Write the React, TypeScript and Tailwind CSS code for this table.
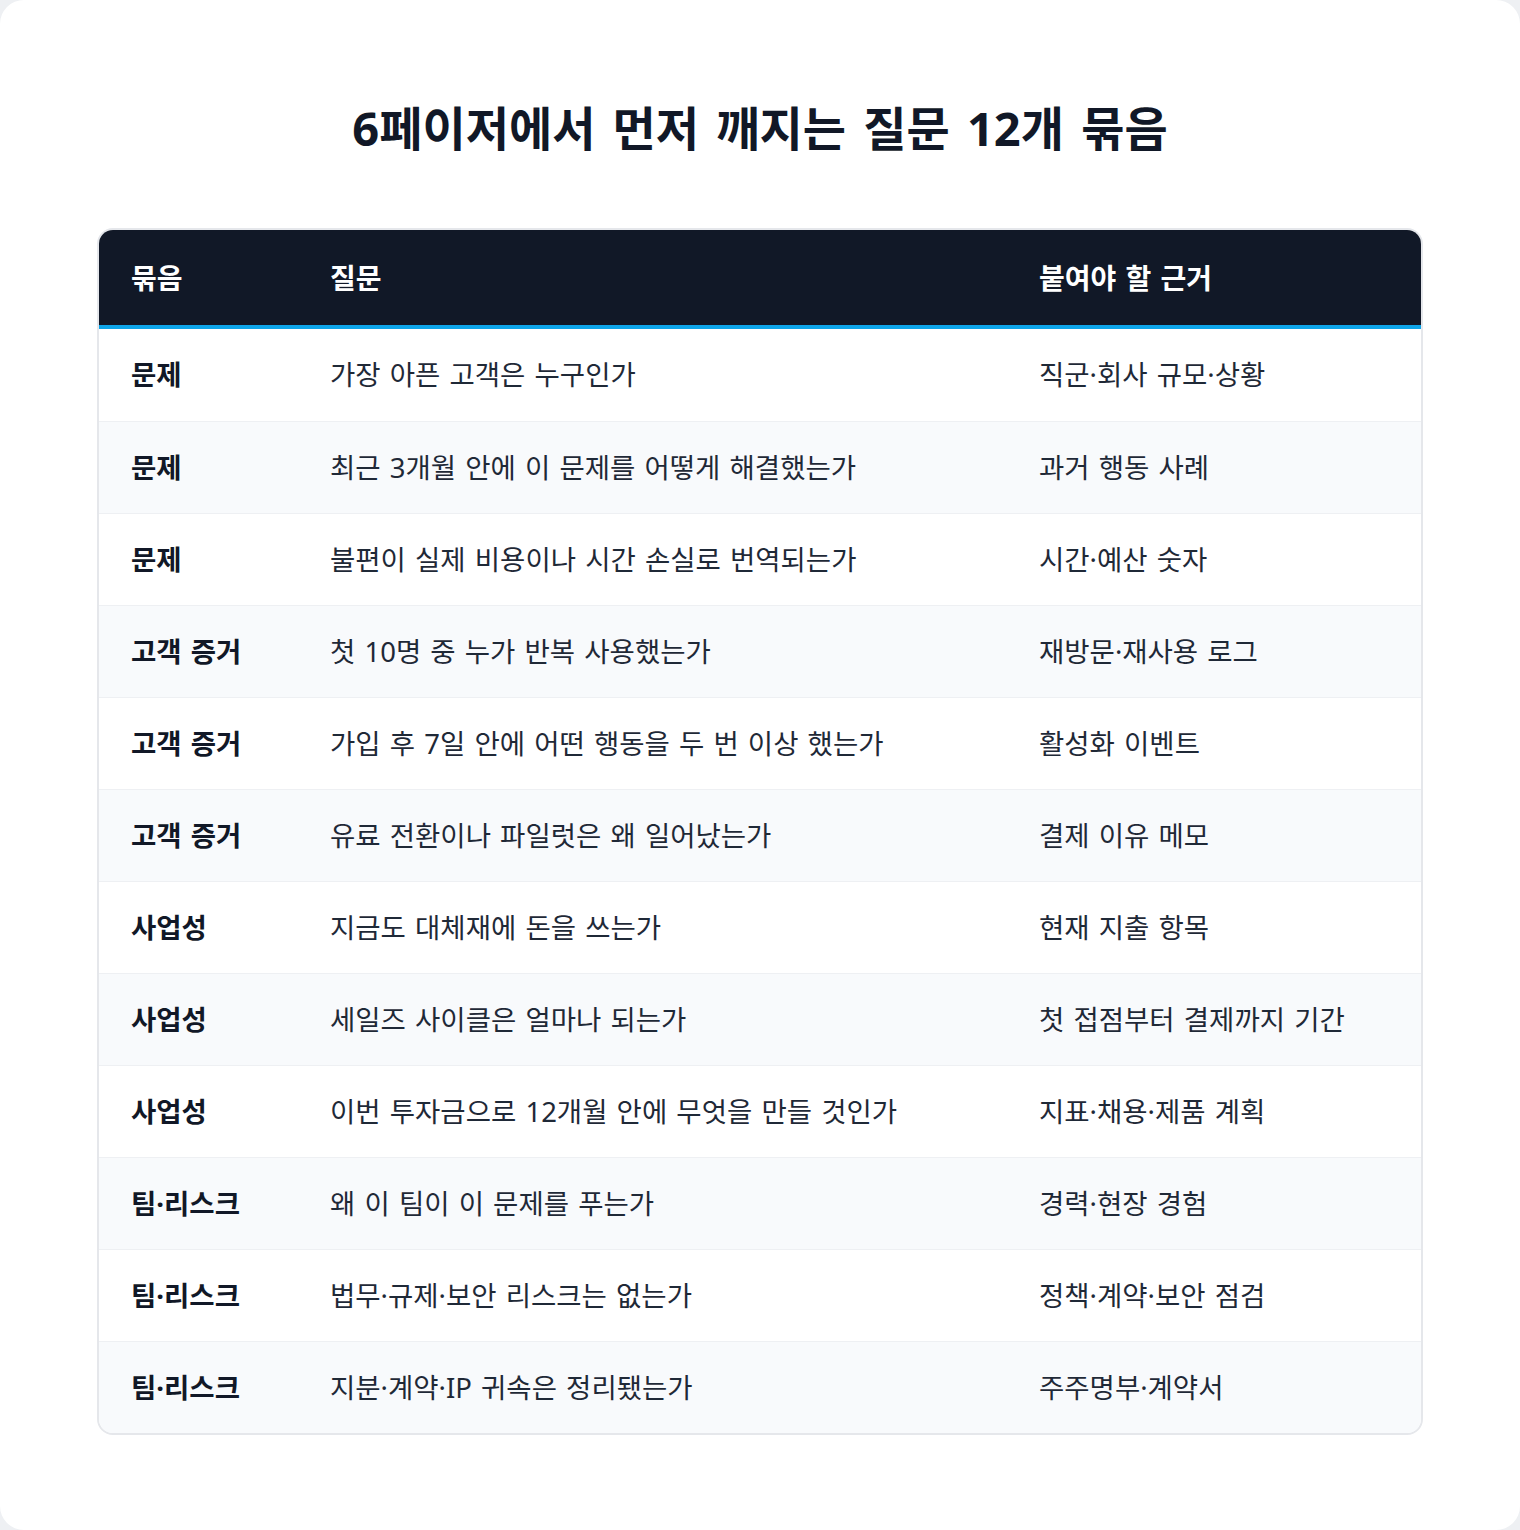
const rows: [string, string, string][] = [
  ["문제", "가장 아픈 고객은 누구인가", "직군·회사 규모·상황"],
  ["문제", "최근 3개월 안에 이 문제를 어떻게 해결했는가", "과거 행동 사례"],
  ["문제", "불편이 실제 비용이나 시간 손실로 번역되는가", "시간·예산 숫자"],
  ["고객 증거", "첫 10명 중 누가 반복 사용했는가", "재방문·재사용 로그"],
  ["고객 증거", "가입 후 7일 안에 어떤 행동을 두 번 이상 했는가", "활성화 이벤트"],
  ["고객 증거", "유료 전환이나 파일럿은 왜 일어났는가", "결제 이유 메모"],
  ["사업성", "지금도 대체재에 돈을 쓰는가", "현재 지출 항목"],
  ["사업성", "세일즈 사이클은 얼마나 되는가", "첫 접점부터 결제까지 기간"],
  ["사업성", "이번 투자금으로 12개월 안에 무엇을 만들 것인가", "지표·채용·제품 계획"],
  ["팀·리스크", "왜 이 팀이 이 문제를 푸는가", "경력·현장 경험"],
  ["팀·리스크", "법무·규제·보안 리스크는 없는가", "정책·계약·보안 점검"],
  ["팀·리스크", "지분·계약·IP 귀속은 정리됐는가", "주주명부·계약서"],
];

export default function App() {
  return (
    <div className="min-h-screen bg-[#eef0f3] font-['Noto_Sans','Noto_Sans_CJK_KR',sans-serif]">
      <div className="h-[1530px] w-[1520px] rounded-3xl bg-white px-[97px] pt-[95px]">
        <h1 className="text-center text-[47px] font-bold leading-[67px] text-[#111827] [word-spacing:5px]">
          6페이저에서 먼저 깨지는 질문 12개 묶음
        </h1>

        <div className="mt-[66px] overflow-hidden rounded-2xl border-2 border-[#e5e7eb]">
          <div className="grid h-[99px] grid-cols-[199px_709px_1fr] items-center border-b-4 border-[#0ea5e9] bg-[#111827] text-[28px] font-bold text-white [word-spacing:2px]">
            <div className="pl-8">묶음</div>
            <div className="pl-8">질문</div>
            <div className="pl-8">붙여야 할 근거</div>
          </div>

          {rows.map(([group, question, proof], i) => (
            <div
              key={i}
              className={`grid h-[92px] grid-cols-[199px_709px_1fr] items-center text-[27.5px] [word-spacing:2px] ${
                i > 0 ? "border-t border-[#eef0f3]" : ""
              } ${i % 2 === 1 ? "bg-[#f8fafc]" : "bg-white"}`}
            >
              <div className="pl-8 font-bold text-[#111827]">{group}</div>
              <div className="pl-8 text-[#1f2937]">{question}</div>
              <div className="pl-8 text-[#1f2937]">{proof}</div>
            </div>
          ))}
        </div>
      </div>
    </div>
  );
}
